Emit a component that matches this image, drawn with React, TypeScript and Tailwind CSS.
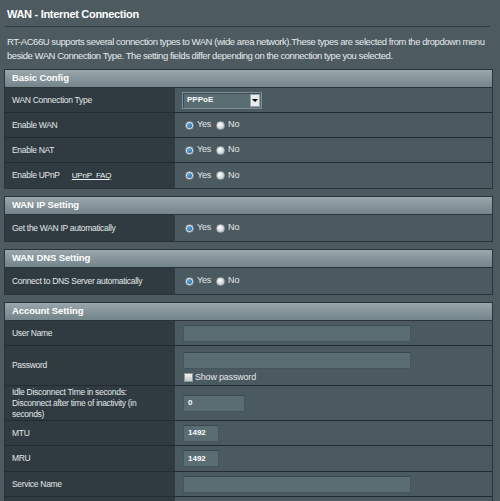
import React from "react";

const font = "font-['Liberation_Sans',Arial,sans-serif]";

function Header({ title }: { title: string }) {
  return (
    <div className="flex h-[18px] items-center border-b border-[#2a3438] bg-gradient-to-b from-[#9aa7ac] to-[#73848a] pl-[7px] text-[9.5px] font-bold tracking-[-0.1px] text-white">
      {title}
    </div>
  );
}

function Row({ label, h = "h-[25px]", children }: { label: React.ReactNode; h?: string; children?: React.ReactNode }) {
  return (
    <div className={`flex ${h} border-b border-[#222b2f] last:border-b-0`}>
      <div className="flex w-[170px] shrink-0 items-center bg-[#2f3b40] pl-[7px] pr-[18px] text-[8.5px] leading-[11px] tracking-[-0.3px] text-[#e3e7e9]">
        <div>{label}</div>
      </div>
      <div className="flex flex-1 items-center bg-[#4b5a60]">{children}</div>
    </div>
  );
}

function Radio({ on }: { on?: boolean }) {
  return on ? (
    <span className="flex h-[9px] w-[9px] items-center justify-center rounded-full border border-[#7f8f95] bg-[radial-gradient(circle_at_40%_35%,#ffffff,#c9d0d3)]">
      <span className="h-[5px] w-[5px] rounded-full bg-[radial-gradient(circle_at_40%_35%,#5aa6e0,#1d5f97)]" />
    </span>
  ) : (
    <span className="h-[9px] w-[9px] rounded-full border border-[#9aa5a9] bg-[radial-gradient(circle_at_40%_35%,#ffffff,#b7bec1)]" />
  );
}

function YesNo() {
  return (
    <div className="flex items-center pl-[10px] text-[9px] tracking-[-0.2px] text-[#e3e7e9]">
      <Radio on />
      <span className="ml-[3px] mr-[5px]">Yes</span>
      <Radio />
      <span className="ml-[3px]">No</span>
    </div>
  );
}

function Field({ w, value = "" }: { w: string; value?: string }) {
  return (
    <div className={`ml-[8px] flex h-[17px] ${w} items-center border border-[#44565c] border-t-[#3a494e] bg-[#596d73] pl-[4px] text-[8px] font-bold text-white`}>
      {value}
    </div>
  );
}

export default function App() {
  return (
    <div className={`h-[501px] w-[500px] overflow-hidden bg-[#4d5a60] pl-[4px] ${font}`}>
      <div className="pl-[3px] pt-[6px] text-[11px] font-bold leading-[16px] tracking-[-0.3px] text-white">WAN - Internet Connection</div>
      <div className="ml-[1px] mt-[4px] h-px w-[485px] bg-[#2f3a3e]" />
      <p className="mt-[8px] w-[488px] pl-[3px] text-[9.5px] leading-[14px] tracking-[-0.45px] text-[#e6eaec]">
        RT-AC66U supports several connection types to WAN (wide area network).These types are selected from the dropdown menu beside WAN Connection Type. The setting fields differ depending on the connection type you selected.
      </p>

      <div className="mt-[6px] flex w-[489px] flex-col gap-[7px]">
        <div className="border border-[#2a3438]">
          <Header title="Basic Config" />
          <Row label="WAN Connection Type">
            <div className="ml-[7px] flex h-[17px] w-[80px] items-center border border-[#7d8e94] bg-[#596d73] shadow-[inset_1px_1px_0_#3d4c51]">
              <span className="flex-1 pl-[4px] text-[8px] font-bold text-white">PPPoE</span>
              <span className="mr-[1px] flex h-[13px] w-[10px] items-center justify-center border border-[#9aa5a9] bg-[#e8eaeb]">
                <span className="h-0 w-0 border-x-[3px] border-t-[3px] border-x-transparent border-t-black" />
              </span>
            </div>
          </Row>
          <Row label="Enable WAN"><YesNo /></Row>
          <Row label="Enable NAT"><YesNo /></Row>
          <Row
            label={
              <>
                Enable UPnP
                <span className="ml-[12px] text-[8px] tracking-[-0.2px] text-[#eef1f2] underline">UPnP&nbsp;&nbsp;FAQ</span>
              </>
            }
          >
            <YesNo />
          </Row>
        </div>

        <div className="border border-[#2a3438]">
          <Header title="WAN IP Setting" />
          <Row label="Get the WAN IP automatically" h="h-[26px]"><YesNo /></Row>
        </div>

        <div className="border border-[#2a3438]">
          <Header title="WAN DNS Setting" />
          <Row label="Connect to DNS Server automatically" h="h-[26px]"><YesNo /></Row>
        </div>

        <div className="border border-[#2a3438]">
          <Header title="Account Setting" />
          <Row label="User Name" h="h-[25px]"><Field w="w-[228px]" /></Row>
          <Row label="Password" h="h-[40px]">
            <div className="flex flex-col gap-[3px] self-start pt-[6px]">
              <Field w="w-[228px]" />
              <div className="ml-[9px] flex items-center text-[9px] leading-[11px] tracking-[-0.2px] text-[#e3e7e9]">
                <span className="h-[9px] w-[9px] border border-[#8e999d] bg-gradient-to-b from-[#f2f2f2] to-[#c3c8ca]" />
                <span className="ml-[2px]">Show password</span>
              </div>
            </div>
          </Row>
          <Row label="Idle Disconnect Time in seconds: Disconnect after time of inactivity (in seconds)" h="h-[35px]">
            <Field w="w-[62px]" value="0" />
          </Row>
          <Row label="MTU" h="h-[25px]"><Field w="w-[36px]" value="1492" /></Row>
          <Row label="MRU" h="h-[26px]"><Field w="w-[36px]" value="1492" /></Row>
          <Row label="Service Name" h="h-[25px]"><Field w="w-[228px]" /></Row>
          <Row label="Access Concentrator Name" h="h-[25px]"><Field w="w-[228px]" /></Row>
        </div>
      </div>
    </div>
  );
}
